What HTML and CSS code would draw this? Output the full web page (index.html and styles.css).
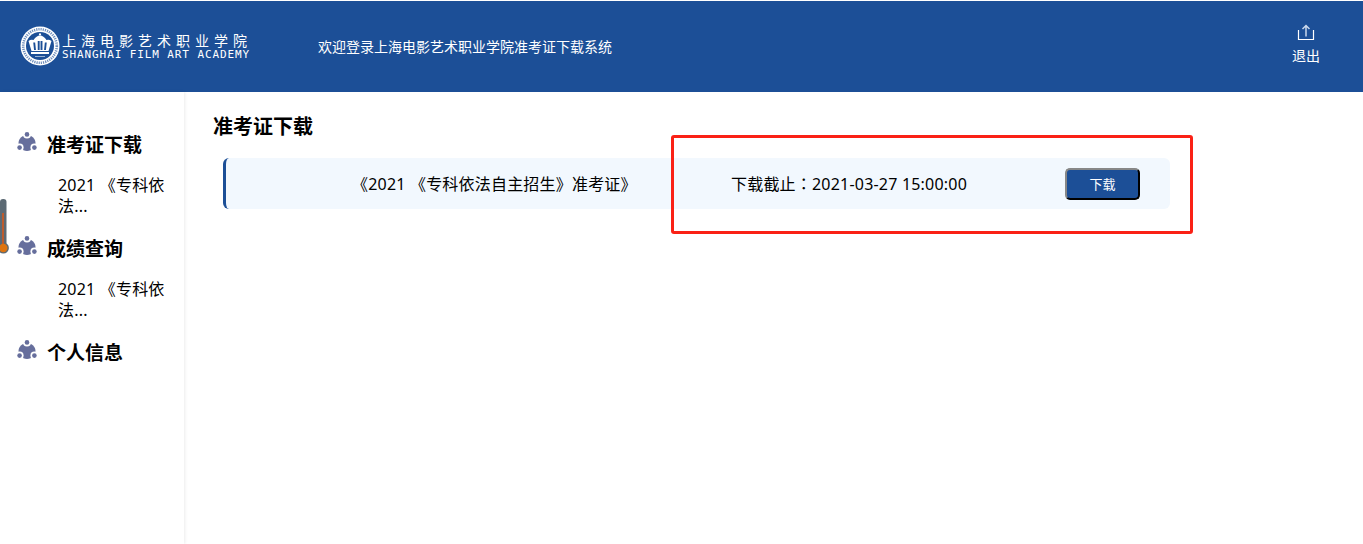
FILE: index.html
```html
<!DOCTYPE html>
<html lang="zh-CN">
<head>
    <meta charset="UTF-8">
    <title>准考证下载</title>
    <link rel="stylesheet" href="styles.css">
</head>
<body>
    <header class="top-bar">
        <div class="logo">
            <svg class="logo-badge" viewBox="0 0 40 40" width="40" height="40">
                <circle cx="20" cy="20" r="19.5" fill="#fff"/>
                <circle cx="20" cy="20" r="16.8" fill="none" stroke="#6f8fbd" stroke-width="2.6" stroke-dasharray="1.2 1"/>
                <circle cx="20" cy="20" r="14" fill="#1c4f97"/>
                <path d="M8.5 15 Q11 13 13.5 14 Q16.5 9.5 20 9.5 Q23.5 9.5 26.5 14 Q29 13 31.5 15 L28.5 25 H11.5 Z" fill="#fff"/>
                <path d="M14.2 16.5 L15 24 M18.7 15 V24 M21.5 15 V24 M25.8 16.5 L25 24" stroke="#1c4f97" stroke-width="1.9" fill="none"/>
                <rect x="11" y="26" width="18" height="2" fill="#fff"/>
                <rect x="15" y="30" width="10" height="0.9" fill="#a9bfdc"/>
                <circle cx="20" cy="8.4" r="1.1" fill="#fff"/>
            </svg>
            <div class="logo-text">
                <div class="logo-cn">上海电影艺术职业学院</div>
                <div class="logo-en">SHANGHAI FILM ART ACADEMY</div>
            </div>
        </div>
        <div class="welcome">欢迎登录上海电影艺术职业学院准考证下载系统</div>
        <a class="logout">
            <svg viewBox="0 0 18 18" width="18" height="18">
                <path d="M1.5 7 V16.5 H16.5 V7" fill="none" stroke="#fff" stroke-width="1.2"/>
                <path d="M9 13.5 V2.5 M5.5 6 L9 2.5 L12.5 6" fill="none" stroke="#c9d8ec" stroke-width="1.5"/>
            </svg>
            <span>退出</span>
        </a>
    </header>

    <div class="page">
        <aside class="sidebar">
            <div class="menu-group">
                <h3 class="menu-title">
                    <svg class="menu-icon" viewBox="0 0 20 20" width="20" height="20"><use href="#team"/></svg>
                    准考证下载
                </h3>
                <a class="menu-item">2021 《专科依法...</a>
            </div>
            <div class="menu-group">
                <h3 class="menu-title">
                    <svg class="menu-icon" viewBox="0 0 20 20" width="20" height="20"><use href="#team"/></svg>
                    成绩查询
                </h3>
                <a class="menu-item">2021 《专科依法...</a>
            </div>
            <div class="menu-group">
                <h3 class="menu-title">
                    <svg class="menu-icon" viewBox="0 0 20 20" width="20" height="20"><use href="#team"/></svg>
                    个人信息
                </h3>
            </div>
        </aside>

        <main class="content">
            <h2 class="content-title">准考证下载</h2>
            <div class="ticket-row">
                <span class="ticket-name">《2021 《专科依法自主招生》准考证》</span>
                <span class="ticket-deadline">下载截止<span class="colon" lang="zh-TW">：</span>2021-03-27 15:00:00</span>
                <button class="ticket-btn">下载</button>
            </div>
        </main>
    </div>

    <!-- 截图上的标注 -->
    <div class="mark-box"></div>
    <svg class="thermo" viewBox="0 0 9 57" width="9" height="57">
        <rect x="0" y="1" width="6.5" height="50" rx="3" fill="#5c6a74"/>
        <circle cx="3.3" cy="50" r="5.6" fill="#5c6a74"/>
        <rect x="2.2" y="15" width="1.6" height="32" fill="#d4581c"/>
        <circle cx="3.3" cy="50" r="4.2" fill="#dd7410"/>
    </svg>

    <svg width="0" height="0" class="defs">
        <symbol id="team" viewBox="0 0 20 20">
            <path d="M10 3 C15 3 18.5 7 18.5 11 C18.5 15 15 19 10 19 C5 19 1.5 15 1.5 11 C1.5 7 5 3 10 3 Z" fill="#666e9c"/>
            <circle cx="10" cy="2.4" r="4" fill="#fff"/>
            <circle cx="2.6" cy="15.6" r="4" fill="#fff"/>
            <circle cx="17.4" cy="15.6" r="4" fill="#fff"/>
            <circle cx="10" cy="2.4" r="2.3" fill="#666e9c"/>
            <circle cx="2.6" cy="15.6" r="2.3" fill="#666e9c"/>
            <circle cx="17.4" cy="15.6" r="2.3" fill="#666e9c"/>
        </symbol>
    </svg>
</body>
</html>
```

FILE: styles.css
```css
body {
    margin: 0;
    height: 544px;
    overflow: hidden;
    position: relative;
    font-family: "Noto Sans", "Noto Sans CJK SC", sans-serif;
    color: #000;
    background-color: #fff;
}

.top-bar {
    display: flex;
    align-items: center;
    height: 91px;
    margin-top: 1px;
    padding: 0 20px;
    background-color: #1c4f97;
    color: #fff;
}

.logo {
    display: flex;
    align-items: center;
    width: 298px;
    margin-top: -1px;
}

.logo-badge {
    flex: none;
}

.logo-text {
    margin-left: 2px;
}

.logo-cn {
    font-family: "Noto Sans CJK SC", sans-serif;
    font-size: 14px;
    line-height: 17px;
    letter-spacing: 5px;
    white-space: nowrap;
}

.logo-en {
    font-family: "DejaVu Sans Mono", monospace;
    font-size: 11px;
    line-height: 12px;
    letter-spacing: 0.9px;
    white-space: nowrap;
}

.welcome {
    font-size: 14px;
    flex: 1;
    margin-top: -2px;
}

.logout {
    display: flex;
    flex-direction: column;
    align-items: center;
    gap: 5px;
    margin-right: 23px;
    margin-top: -4px;
    font-size: 14px;
    line-height: 20px;
}

.page {
    display: flex;
    height: 452px;
}

.sidebar {
    width: 184px;
    flex: none;
    padding-top: 33px;
    box-sizing: border-box;
    box-shadow: 1px 0 3px rgba(0, 0, 0, 0.08);
}

.menu-group {
    margin-bottom: 12px;
}

.menu-title {
    display: flex;
    align-items: center;
    gap: 10px;
    margin: 0;
    padding-left: 17px;
    font-size: 19px;
    line-height: 40px;
    height: 40px;
    font-weight: bold;
}

.menu-icon {
    flex: none;
    margin-top: -6px;
}

.menu-item {
    display: block;
    width: 112px;
    margin-left: 58px;
    margin-top: 10px;
    font-size: 16px;
    line-height: 21px;
    letter-spacing: 0.2px;
}

.content {
    flex: 1;
    padding-left: 29px;
}

.content-title {
    margin: 20px 0 16px;
    font-size: 20px;
    line-height: 30px;
    font-weight: bold;
}

.ticket-row {
    display: flex;
    align-items: center;
    width: 947px;
    height: 51px;
    margin-left: 10px;
    padding-left: 126px;
    box-sizing: border-box;
    border-left: 3px solid #1c4f97;
    border-radius: 6px;
    background-color: #f2f8fe;
    font-size: 16px;
    letter-spacing: 0.2px;
}

.ticket-name {
    width: 379px;
    flex: none;
    white-space: nowrap;
    margin-top: -1px;
}

.ticket-deadline {
    width: 334px;
    flex: none;
    white-space: nowrap;
    margin-top: -1px;
}

.colon {
    font-family: "Noto Sans CJK TC", sans-serif;
}

.ticket-btn {
    width: 75px;
    height: 32px;
    padding: 0;
    border: 2px outset #333;
    border-radius: 5px;
    background-color: #1c4f97;
    color: #fff;
    font-family: inherit;
    font-size: 13px;
}

.mark-box {
    position: absolute;
    left: 671px;
    top: 135px;
    width: 516px;
    height: 93px;
    border: 3px solid #fa2116;
    border-radius: 3px;
}

.thermo {
    position: absolute;
    left: 0;
    top: 198px;
}

.defs {
    position: absolute;
}
```
